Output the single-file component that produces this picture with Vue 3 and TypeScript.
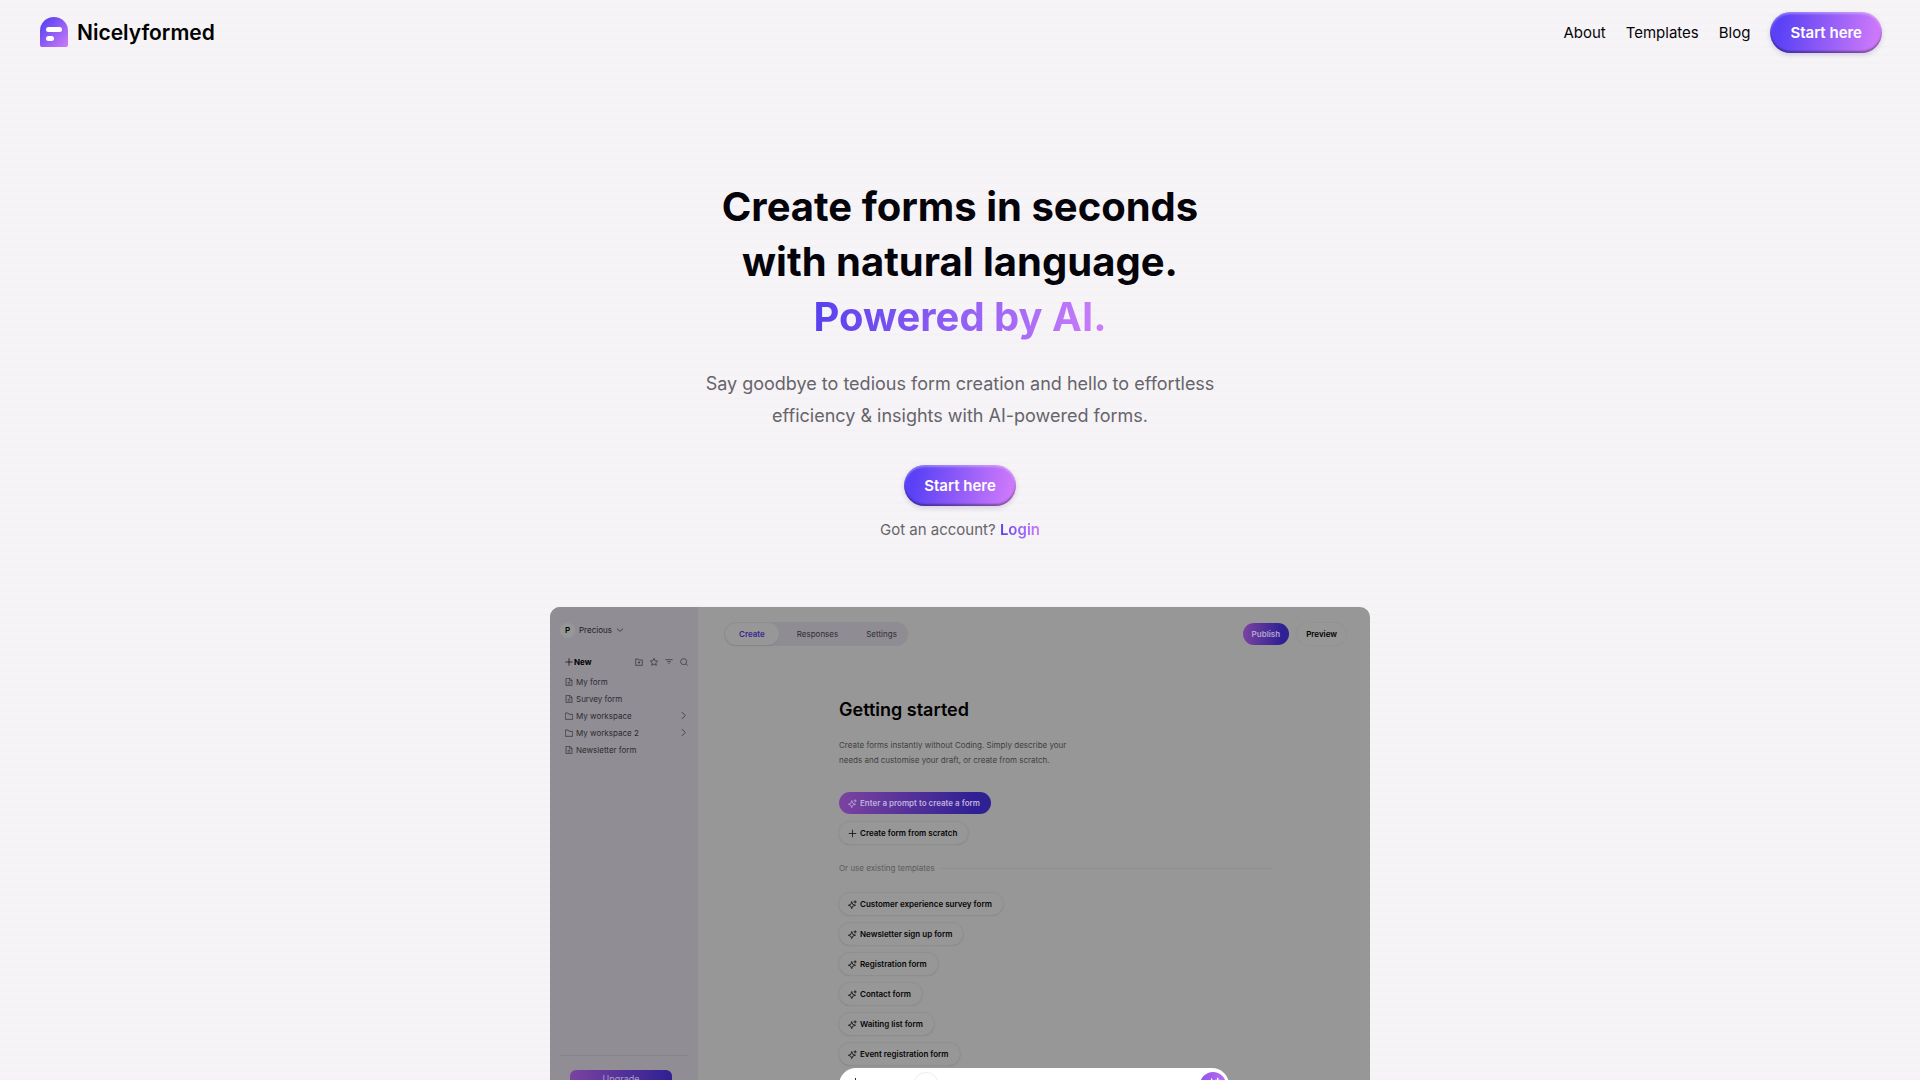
<script setup lang="ts">
interface Entry {
  label: string
  kind: 'file' | 'folder'
}

const navLinks: string[] = ['About', 'Templates', 'Blog']
const tabs: string[] = ['Create', 'Responses', 'Settings']
const entries: Entry[] = [
  { label: 'My form', kind: 'file' },
  { label: 'Survey form', kind: 'file' },
  { label: 'My workspace', kind: 'folder' },
  { label: 'My workspace 2', kind: 'folder' },
  { label: 'Newsletter form', kind: 'file' },
]
const templates: string[] = [
  'Customer experience survey form',
  'Newsletter sign up form',
  'Registration form',
  'Contact form',
  'Waiting list form',
  'Event registration form',
]
const sparkle =
  'M10 4 L12.500 11.500 L20 14 L12.500 16.500 L10 23 L7.500 16.500 L1 14 L7.500 11.500 Z M15 5 H23 M19 1 V9'
</script>

<template>
  <div class="page">
    <header class="header">
      <a class="brand" href="#">
        <svg class="logo" viewBox="0 0 28 30" aria-hidden="true">
          <defs>
            <linearGradient id="logo-fill" x1="0" y1="0" x2="1" y2="1">
              <stop offset="0.15" stop-color="#5f45f2" />
              <stop offset="1" stop-color="#cf7bf8" />
            </linearGradient>
          </defs>
          <path d="M0 14a14 14 0 0 1 28 0v14a2 2 0 0 1-2 2H2a2 2 0 0 1-2-2z" fill="url(#logo-fill)" />
          <rect x="6" y="10" width="16" height="5" rx="2.500" fill="#fff" />
          <rect x="6" y="19" width="8" height="5" rx="2.500" fill="#fff" />
        </svg>
        <span>Nicelyformed</span>
      </a>
      <nav class="nav">
        <a v-for="link in navLinks" :key="link" href="#">{{ link }}</a>
        <button class="cta" type="button">Start here</button>
      </nav>
    </header>

    <main class="hero">
      <h1>
        Create forms in seconds<br />with natural language.<br /><span class="gradient-text">Powered by AI.</span>
      </h1>
      <p class="lead">Say goodbye to tedious form creation and hello to effortless efficiency &amp; insights with AI-powered forms.</p>
      <button class="cta" type="button">Start here</button>
      <p class="account">Got an account? <a class="gradient-text" href="#">Login</a></p>

      <section class="shot">
        <aside class="side">
          <div class="user">
            <span class="avatar">P</span>
            <span>Precious</span>
            <svg viewBox="0 0 24 24"><path d="M3 8l9 8 9-8" /></svg>
          </div>
          <div class="tools">
            <button class="new" type="button">
              <svg viewBox="0 0 24 24"><path d="M12 1v22M1 12h22" /></svg>New
            </button>
            <svg viewBox="0 0 24 24"><path d="M2 3h7l3 3h10v16H2zM12 10v7M8.500 13.500h7" /></svg>
            <svg viewBox="0 0 24 24"><path d="M12 1l3.300 7.300 7.700.9-5.700 5.300 1.600 7.700-6.900-3.900-6.900 3.900 1.600-7.700L1 9.200l7.700-.9z" /></svg>
            <svg viewBox="0 0 24 24"><path d="M1 5h22M6 11h12M10 17h4" /></svg>
            <svg viewBox="0 0 24 24"><circle cx="11" cy="11" r="9" /><path d="M18 18l5 5" /></svg>
          </div>
          <ul class="entries">
            <li v-for="entry in entries" :key="entry.label">
              <svg v-if="entry.kind === 'file'" viewBox="0 0 24 24">
                <path d="M3 1h12l6 6v16H3zM14 1v7h7M8 13h8M8 18h8" />
              </svg>
              <svg v-else viewBox="0 0 24 24"><path d="M1 3h8l3 4h11v15H1z" /></svg>
              <span>{{ entry.label }}</span>
              <svg v-if="entry.kind === 'folder'" class="chevron" viewBox="0 0 24 24"><path d="M9 3l9 9-9 9" /></svg>
            </li>
          </ul>
          <div class="upgrade-area">
            <button class="upgrade" type="button">Upgrade</button>
          </div>
        </aside>

        <div class="work">
          <div class="bar">
            <div class="tabs">
              <button v-for="(tab, i) in tabs" :key="tab" type="button" :class="{ active: i === 0 }">{{ tab }}</button>
            </div>
            <div class="actions">
              <button class="publish" type="button">Publish</button>
              <button class="preview" type="button">Preview</button>
            </div>
          </div>
          <div class="content">
            <h2>Getting started</h2>
            <p class="intro">Create forms instantly without Coding. Simply describe your<br />needs and customise your draft, or create from scratch.</p>
            <div class="pills">
              <button class="pill primary" type="button">
                <svg viewBox="0 0 24 24"><path :d="sparkle" /></svg>Enter a prompt to create a form
              </button>
              <button class="pill" type="button">
                <svg viewBox="0 0 24 24"><path d="M12 2v20M2 12h20" /></svg>Create form from scratch
              </button>
            </div>
            <div class="divider">Or use existing templates</div>
            <div class="pills">
              <button v-for="name in templates" :key="name" class="pill" type="button">
                <svg viewBox="0 0 24 24"><path :d="sparkle" /></svg>{{ name }}
              </button>
            </div>
          </div>
        </div>

        <div class="prompt">
          <span class="caret"></span>
          <span class="ring"></span>
          <button class="send" type="button" aria-label="Generate">
            <svg viewBox="0 0 24 24"><path :d="sparkle" /></svg>
          </button>
        </div>
      </section>
    </main>
  </div>
</template>

<style>
body {
  background: #f5f3f6;
}
</style>

<style scoped>
.page {
  height: 100vh;
  overflow: hidden;
  font-family: Inter, 'Liberation Sans', sans-serif;
  color: #05040a;
  background: repeating-linear-gradient(#f6f4f7 0 5px, #f3f1f4 6px 7px, #f6f4f7 8px);
}

.page *,
.page {
  box-sizing: border-box;
}

button {
  border: 0;
  margin: 0;
  padding: 0;
  background: none;
  font: inherit;
  color: inherit;
  white-space: nowrap;
}

a {
  color: inherit;
  text-decoration: none;
}

svg {
  flex: none;
  fill: none;
  stroke: currentColor;
  stroke-width: 2;
}

.header {
  display: flex;
  align-items: center;
  justify-content: space-between;
  height: 64px;
  padding: 0 38px 0 40px;
}

.brand {
  display: flex;
  align-items: center;
  gap: 9px;
  font-size: 21px;
  font-weight: 600;
  color: #000;
}

.logo {
  width: 28px;
  height: 30px;
  stroke: none;
}

.nav {
  display: flex;
  align-items: center;
  gap: 20px;
  font-size: 15px;
}

.cta {
  height: 41px;
  padding: 0 20px;
  border-radius: 21px;
  font-size: 15px;
  font-weight: 600;
  color: #fff;
  background: linear-gradient(100deg, #5a41f5 10%, #cb78fa 92%);
  box-shadow: inset 0 2px 2px rgba(255, 255, 255, 0.3), inset 0 -2px 2px rgba(0, 0, 0, 0.35), 0 2px 5px rgba(60, 40, 120, 0.18);
}

.gradient-text {
  color: transparent;
  background: linear-gradient(90deg, #5840ee, #cb7efa);
  background-clip: text;
}

.hero {
  display: flex;
  flex-direction: column;
  align-items: center;
  padding-top: 115px;
  text-align: center;
}

h1 {
  margin: 0;
  font-size: 40px;
  line-height: 55px;
  font-weight: 700;
}

.lead {
  max-width: 540px;
  margin: 24px 0 33px;
  font-size: 18px;
  line-height: 32px;
  color: #66646a;
}

.account {
  margin: 14px 0 67px;
  font-size: 15px;
  line-height: 20px;
  color: #66646a;
}

.account a {
  font-weight: 600;
}

.shot {
  position: relative;
  display: flex;
  width: 820px;
  max-width: 100%;
  height: 520px;
  border-radius: 10px;
  background: #979797;
  font-size: 8px;
  text-align: left;
  overflow: hidden;
}

.side {
  display: flex;
  flex-direction: column;
  width: 148px;
  padding: 12px 10px 0;
  background: #908e94;
  color: #2c2b2f;
}

.side svg {
  width: 8px;
  height: 8px;
}

.user {
  display: flex;
  align-items: center;
  gap: 4px;
  height: 22px;
  color: #1c1b1f;
}

.avatar {
  display: grid;
  place-items: center;
  width: 15px;
  height: 15px;
  border-radius: 50%;
  background: #979797;
  font-weight: 600;
  color: #000;
}

.tools {
  display: flex;
  align-items: center;
  gap: 7px;
  margin-top: 13px;
  padding-left: 5px;
  height: 16px;
}

.new {
  display: flex;
  align-items: center;
  gap: 1px;
  margin-right: auto;
  font-weight: 700;
  color: #000;
}

.entries {
  margin: 3px 0 0;
  padding: 0 0 0 5px;
  list-style: none;
}

.entries li {
  display: flex;
  align-items: center;
  gap: 3px;
  height: 17px;
}

.side .chevron {
  width: 10px;
  height: 9px;
  margin-left: auto;
}

.upgrade-area {
  margin: auto 0 0;
  padding: 14px 16px 40px 10px;
  border-top: 1px solid #87858b;
}

.upgrade {
  width: 100%;
  height: 17px;
  border-radius: 6px 6px 0 0;
  font-size: 9px;
  line-height: 17px;
  color: #a9a0c4;
  background: linear-gradient(90deg, #7b43a0, #2f2093);
}

.work {
  flex: 1;
  padding: 15px 24px 0 26px;
}

.bar {
  display: flex;
  align-items: center;
  justify-content: space-between;
  height: 24px;
}

.tabs {
  display: flex;
  height: 24px;
  padding: 1px;
  border-radius: 12px;
  background: #8f8c93;
  color: #2f2e32;
}

.tabs button {
  padding: 0 10px 0 18px;
}

.tabs .active {
  padding: 0 14px;
  border-radius: 11px;
  font-weight: 600;
  color: #3a2496;
  background: #979797;
  box-shadow: 0 1px 1px #858387;
}

.actions {
  display: flex;
  gap: 8px;
}

.actions button {
  height: 22px;
  padding: 0 9px;
  border-radius: 11px;
  font-weight: 600;
}

.publish {
  color: #b3a6cf;
  background: linear-gradient(90deg, #7b43a0, #2f2093 85%);
}

.preview {
  color: #000;
  box-shadow: 0 0 2px #8a8a8a;
}

.content {
  width: 434px;
  margin: 53px 0 0 115px;
}

h2 {
  margin: 0;
  font-size: 18px;
  line-height: 22px;
  font-weight: 600;
  color: #000;
}

.intro {
  margin: 17px 0 24px;
  font-size: 8px;
  line-height: 15px;
  color: #3f3f3f;
}

.pills {
  display: flex;
  flex-direction: column;
  align-items: flex-start;
  gap: 8px;
}

.pill {
  display: flex;
  align-items: center;
  gap: 3px;
  height: 22px;
  padding: 0 11px 0 9px;
  border-radius: 11px;
  font-weight: 600;
  color: #060606;
  box-shadow: 0 0 1px 1px #8f8f8f, 0 1px 1px #848484;
}

.pill svg {
  width: 9px;
  height: 9px;
}

.primary {
  color: #c0b0dc;
  background: linear-gradient(90deg, #7b43a0, #2f2093 90%);
  box-shadow: none;
}

.divider {
  display: flex;
  align-items: center;
  gap: 5px;
  margin: 16px 0 17px;
  height: 16px;
  color: #5c5c5c;
}

.divider::after {
  content: '';
  flex: 1;
  height: 1px;
  background: #8f8f8f;
}

.prompt {
  position: absolute;
  top: 461px;
  left: 289px;
  display: flex;
  align-items: center;
  width: 390px;
  height: 34px;
  padding: 0 3px 0 16px;
  border-radius: 17px;
  background: #fff;
}

.caret {
  width: 1px;
  height: 14px;
  background: #333;
}

.ring {
  width: 26px;
  height: 26px;
  margin: 0 auto 0 57px;
  border: 1px solid #eeeef0;
  border-radius: 50%;
}

.send {
  display: grid;
  place-items: center;
  width: 26px;
  height: 26px;
  border-radius: 50%;
  color: #fff;
  background: linear-gradient(90deg, #8f55ea, #bd6cf2);
}

.send svg {
  width: 16px;
  height: 16px;
}
</style>
